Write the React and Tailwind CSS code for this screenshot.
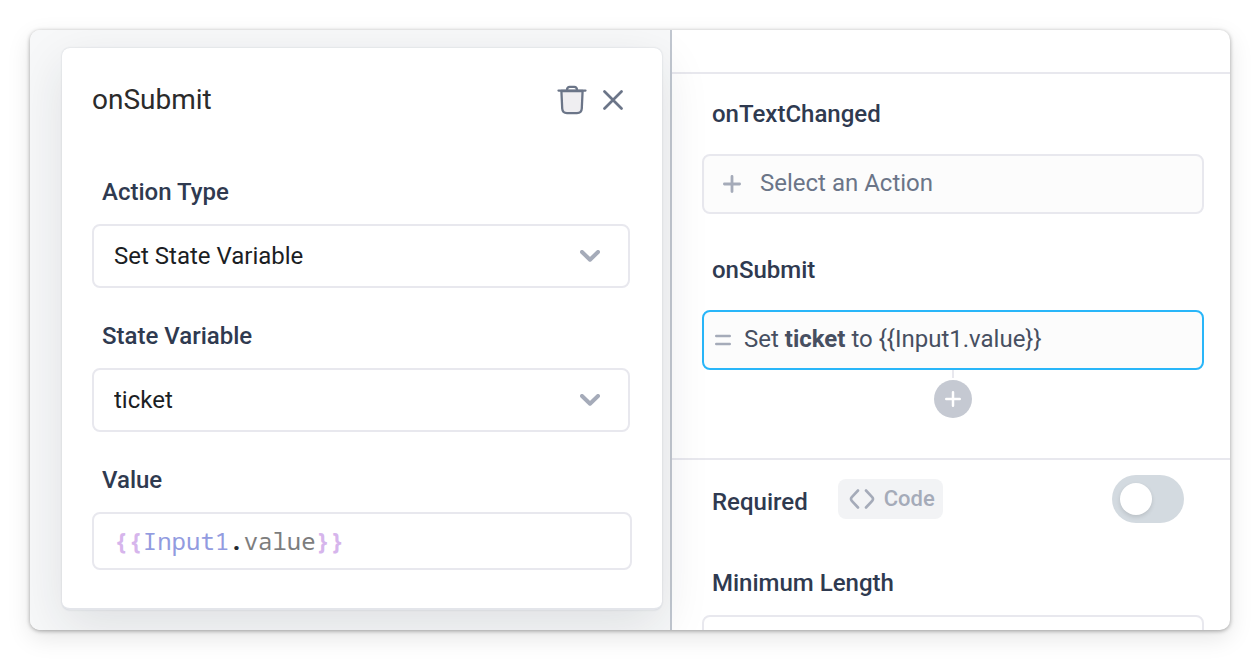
import { useState } from "react";

const PlusIcon = ({ className }) => (
  <svg viewBox="0 0 18 18" fill="none" stroke="currentColor" strokeWidth="2.800" strokeLinecap="round" className={className} aria-hidden="true">
    <path d="M9 1.400v15.200M1.400 9h15.200" />
  </svg>
);

const TrashIcon = () => (
  <svg width="30" height="32" viewBox="0 0 30 32" fill="none" stroke="#6b7588" strokeWidth="2.300" strokeLinecap="round" strokeLinejoin="round" aria-hidden="true">
    <path d="M4.400 7l.8 17.500c.2 3 1.900 4.600 4.800 4.600h10c2.900 0 4.600-1.600 4.800-4.600L25.600 7z" fill="#efeef1" />
    <path d="M1.500 6.600h27" />
    <path d="M10 6.200c0-2.200.9-3.400 2.700-3.400h4.600c1.800 0 2.700 1.200 2.700 3.400" />
  </svg>
);

const CloseIcon = () => (
  <svg width="20" height="20" viewBox="0 0 20 20" fill="none" stroke="#6b7588" strokeWidth="2.700" strokeLinecap="round" aria-hidden="true">
    <path d="M1.500 1.500l17 17M18.500 1.500l-17 17" />
  </svg>
);

function SelectField({ id, label, options }) {
  const [value, setValue] = useState(options[0]);

  return (
    <div className="mb-8">
      <label htmlFor={id} className="block px-[10px] mb-4 leading-8 font-medium text-[#2f3a50]">
        {label}
      </label>
      <div className="grid items-center mr-[2px]">
        <select
          id={id}
          value={value}
          onChange={(e) => setValue(e.target.value)}
          className="col-start-1 row-start-1 w-full h-16 px-5 appearance-none bg-white text-[#1b1e24] border-2 border-[#e8e8ee] rounded-lg"
        >
          {options.map((option) => (
            <option key={option}>{option}</option>
          ))}
        </select>
        <svg
          width="20"
          height="12"
          viewBox="0 0 20 12"
          fill="none"
          stroke="#a5abb9"
          strokeWidth="4"
          strokeLinecap="round"
          strokeLinejoin="round"
          className="col-start-1 row-start-1 justify-self-end mr-[30px] pointer-events-none"
          aria-hidden="true"
        >
          <path d="M2 2l8 7.700L18 2" />
        </svg>
      </div>
    </div>
  );
}

// splits a binding like {{Input1.value}} into coloured tokens
function Highlighted({ code }) {
  const tokens = code.match(/\{\{|\}\}|\.\w*|[^{}.]+|[{}]/g) || [];

  return tokens.map((token, i) => {
    if (/[{}]/.test(token)) return <span key={i} className="font-bold text-[#d6b5ec]">{token}</span>;
    if (token[0] === ".") {
      return (
        <span key={i} className="text-[#7d7d7d]">
          <span className="font-bold text-[#24292f]">.</span>
          {token.slice(1)}
        </span>
      );
    }
    return <span key={i} className="text-[#929be0]">{token}</span>;
  });
}

function ActionModal() {
  const [code, setCode] = useState("{{Input1.value}}");

  return (
    <section className="relative z-10 px-[30px] pt-[30px] pb-[38px] bg-white border-b-2 border-[#e3e5ea] rounded-lg shadow-[0_0_2px_rgba(40,60,90,0.2),0_16px_50px_rgba(30,36,42,0.11)]">
      <header className="flex items-center h-11 mb-[54px] pr-[9px]">
        <h1 className="flex-1 text-[28px] text-[#2b2b2b]">onSubmit</h1>
        <button type="button" aria-label="Delete action" className="mr-4">
          <TrashIcon />
        </button>
        <button type="button" aria-label="Close">
          <CloseIcon />
        </button>
      </header>

      <SelectField id="action-type" label="Action Type" options={["Set State Variable", "Run Query", "Navigate To"]} />
      <SelectField id="state-variable" label="State Variable" options={["ticket"]} />

      <label htmlFor="value" className="block px-[10px] mb-4 leading-8 font-medium text-[#2f3a50]">
        Value
      </label>
      <div className="grid items-center h-[58px] px-5 border-2 border-[#e8e8ee] rounded-lg font-['Noto_Sans_Mono','DejaVu_Sans_Mono',monospace]">
        <div className="col-start-1 row-start-1 whitespace-pre leading-8" aria-hidden="true">
          <Highlighted code={code} />
        </div>
        <input
          id="value"
          value={code}
          onChange={(e) => setCode(e.target.value)}
          className="col-start-1 row-start-1 w-full leading-8 text-transparent caret-[#24292f] outline-none"
        />
      </div>
    </section>
  );
}

function PropertyPanel() {
  const [required, setRequired] = useState(false);

  return (
    <aside className="min-w-0 text-[#2f3a50]">
      <div className="h-11 border-b-2 border-[#e8e8ee]" />

      <div className="pt-6 pb-10 pl-[30px] pr-[26px] border-b-2 border-[#e8e8ee]">
        <h2 className="px-[10px] mb-6 leading-8 font-medium">onTextChanged</h2>
        <button type="button" className="flex items-center w-full h-[60px] mb-10 pl-[19px] pb-[2px] bg-[#fcfcfc] border-2 border-[#e8e8ee] rounded-lg text-[#6b7588]">
          <PlusIcon className="size-[18px] mt-[2px] mr-[19px] text-[#a5abb9]" />
          Select an Action
        </button>

        <h2 className="px-[10px] mb-6 leading-8 font-medium">onSubmit</h2>
        <button type="button" className="flex items-center w-full h-[60px] pl-[11px] pb-[2px] bg-[#fcfcfc] border-2 border-[#29b6f9] rounded-lg text-[#474f61]">
          <svg width="16" height="12" viewBox="0 0 16 12" fill="none" stroke="#a5abb9" strokeWidth="2.400" strokeLinecap="round" className="mt-[2px] mr-[13px]" aria-hidden="true">
            <path d="M1.200 2h13.600M1.200 10h13.600" />
          </svg>
          <span>
            Set <b className="font-bold">ticket</b> to {"{{Input1.value}}"}
          </span>
        </button>
        <div className="flex flex-col items-center">
          <span className="w-[2px] h-2 mb-[2px] bg-[#e8e8ee]" />
          <button type="button" aria-label="Add action" className="flex items-center justify-center size-[38px] rounded-full bg-[#c5c9d2] text-white">
            <PlusIcon className="size-4" />
          </button>
        </div>
      </div>

      <div className="pt-[15px] pl-[30px] pr-[26px]">
        <div className="flex items-center mb-11 pl-[10px] pr-5">
          <label htmlFor="required" className="mt-[6px] leading-8 font-medium">
            Required
          </label>
          <button type="button" className="flex items-center h-10 ml-[30px] pl-[11px] pr-2 rounded-lg bg-[#f2f3f5] text-[22px] font-medium text-[#a5abb9]">
            <svg width="26" height="20" viewBox="0 0 26 20" fill="none" stroke="currentColor" strokeWidth="2.600" strokeLinecap="round" strokeLinejoin="round" className="mr-[9px]" aria-hidden="true">
              <path d="M9 1.500L2.800 8.200Q1.200 10 2.800 11.800L9 18.500M17 1.500l6.200 6.700q1.600 1.800 0 3.600L17 18.500" />
            </svg>
            Code
          </button>
          <input
            id="required"
            type="checkbox"
            role="switch"
            checked={required}
            onChange={(e) => setRequired(e.target.checked)}
            className="ml-auto w-[72px] h-12 p-2 appearance-none rounded-full bg-[#d3dae0] checked:bg-[#29b6f9] before:block before:size-8 before:rounded-full before:bg-white before:shadow-[0_2px_4px_rgba(0,0,0,0.12)] checked:before:ml-6"
          />
        </div>

        <label htmlFor="min-length" className="block px-[10px] mb-4 leading-8 font-medium">
          Minimum Length
        </label>
        <input id="min-length" type="text" className="w-full h-16 px-5 bg-white border-2 border-[#e8e8ee] rounded-lg" />
      </div>
    </aside>
  );
}

export default function App() {
  return (
    <main className="h-screen p-[30px] bg-white font-[Roboto,sans-serif] text-2xl">
      <div className="grid grid-cols-[642fr_558fr] h-full overflow-hidden rounded-[10px] bg-white shadow-[0_1px_4px_rgba(0,0,0,0.35),0_8px_24px_rgba(0,0,0,0.1)]">
        <div className="min-w-0 pt-[18px] pl-8 pr-2 bg-[#f7f8f9] border-r-2 border-[#c1c7d0]">
          <ActionModal />
        </div>
        <PropertyPanel />
      </div>
    </main>
  );
}
